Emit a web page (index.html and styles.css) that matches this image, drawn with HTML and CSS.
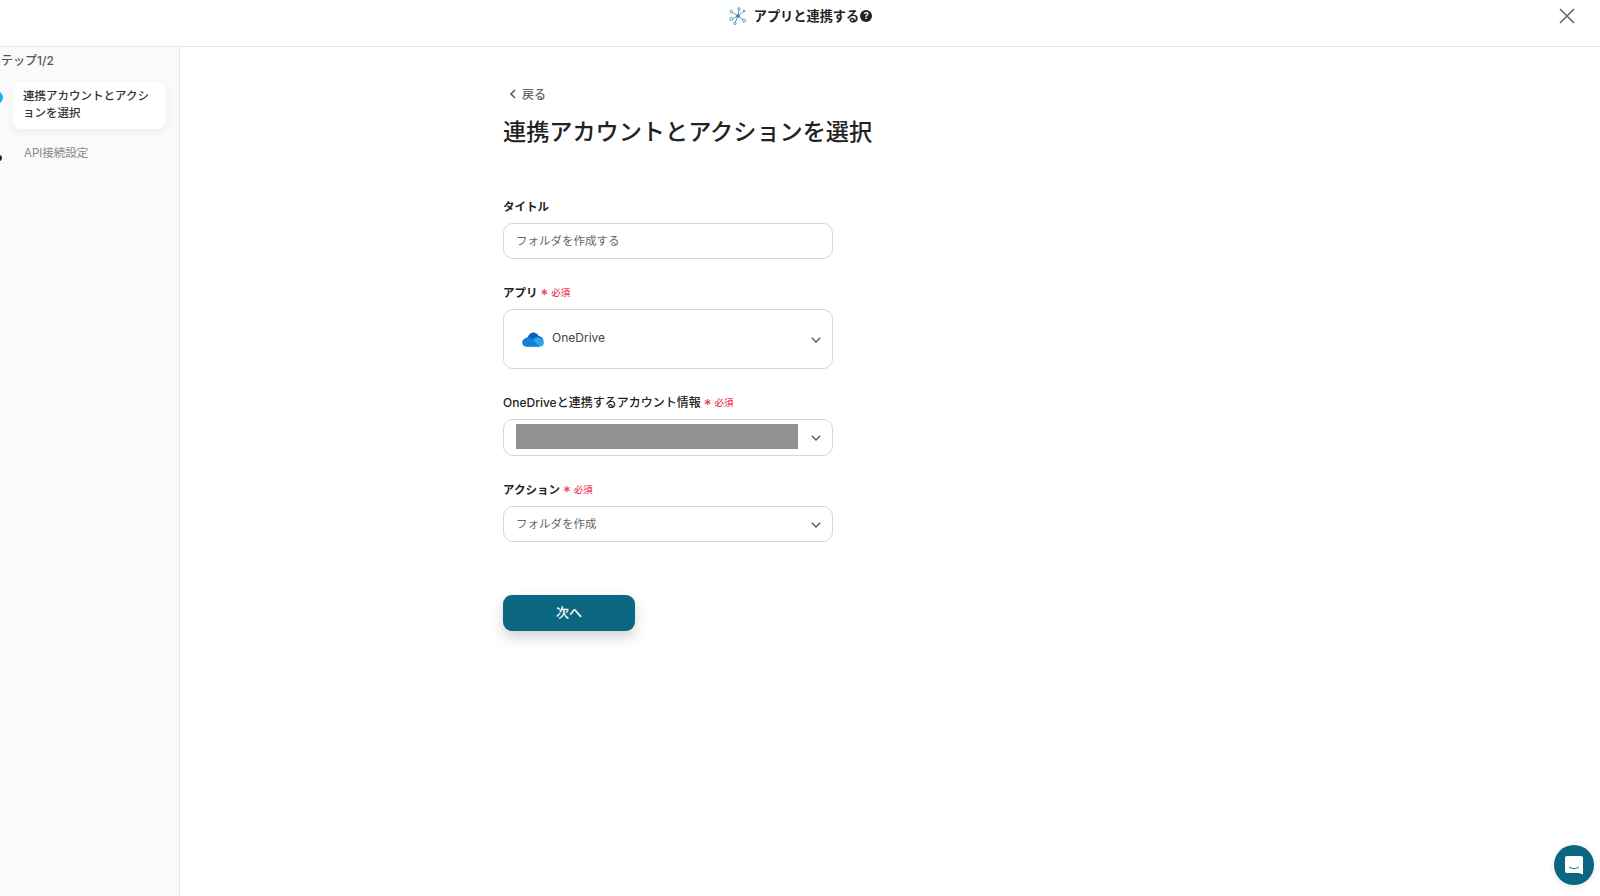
FILE: index.html
```html
<!DOCTYPE html>
<html lang="ja">
<head>
<meta charset="utf-8">
<title>アプリと連携する</title>
<link rel="stylesheet" href="styles.css">
</head>
<body>
<header class="topbar">
  <div class="topbar-title">
    <svg class="net-icon" width="18" height="18" viewBox="0 0 18 18" fill="none" stroke="#4f93ab" stroke-width=".9">
      <path d="M9 9 10 2.500M9 9 2.800 5M9 9l-6.500 3M9 9l6 4.500M9 9l-3 7M9 9l6-5"/>
      <circle cx="10" cy="2" r="1.300" fill="#fff"/>
      <circle cx="2.300" cy="4.700" r="1.400" fill="#fff"/>
      <circle cx="2.300" cy="12" r="1.500" fill="#fff"/>
      <circle cx="15" cy="13.700" r="1.500" fill="#fff"/>
      <circle cx="6" cy="16.300" r="1.200" fill="#fff"/>
      <circle cx="15" cy="4" r=".8" fill="#4f93ab"/>
      <circle cx="9" cy="9" r="1.800" fill="#1f7f9c" stroke="none"/>
    </svg>
    <span>アプリと連携する</span>
    <span class="help">?</span>
  </div>
  <button class="close" aria-label="閉じる">
    <svg width="16" height="16" viewBox="0 0 16 16" fill="none" stroke="#666" stroke-width="1.600"><path d="M1 1l14 14M15 1 1 15"/></svg>
  </button>
</header>
<div class="layout">
  <aside class="sidebar">
    <div class="step-count">ステップ1/2</div>
    <div class="step step-active">
      <span class="dot dot-blue"></span>
      <div class="step-card">連携アカウントとアクションを選択</div>
    </div>
    <div class="step step-next">
      <span class="dot dot-black"></span>
      <div class="step-text">API接続設定</div>
    </div>
  </aside>
  <main class="content">
    <a class="back">
      <svg width="8" height="10" viewBox="0 0 8 10" fill="none" stroke="#555" stroke-width="1.500"><path d="M6 1 2 5l4 4"/></svg>
      <span>戻る</span>
    </a>
    <h1 class="page-title">連携アカウントとアクションを選択</h1>
    <section class="form">
      <div class="field field-title">
        <label class="label">タイトル</label>
        <div class="control control-input"><span class="value">フォルダを作成する</span></div>
      </div>
      <div class="field field-app">
        <label class="label">アプリ<span class="req"><b>*</b>必須</span></label>
        <div class="control control-app">
          <svg class="onedrive" width="22" height="15" viewBox="0 0 24 16">
            <path d="M3 10C3 7.500 4.500 5.800 6.300 5.500 7.300 2.200 9.800.4 12.500.4c2.500 0 4.600 1.500 5.600 3.900 2.800.1 5 2.200 5.500 5.700L12 13z" fill="#0a62b5"/>
            <path d="M12 8.300c1.700-2 3.800-2.800 6-2.600 2.700.2 5 2 5.800 5 .5 2.600-1.300 5-3.800 5H8z" fill="#2aa5e8"/>
            <path d="M12 8.300c-1.500-1.600-3-2.800-6-2.500C2.500 6.300.2 8.600.2 11.400c0 2.600 2 4.600 4.800 4.600h15c-3-2-5.500-5-8-7.700z" fill="#1080d8"/>
          </svg>
          <span class="app-name">OneDrive</span>
          <svg class="chev" width="10" height="6" viewBox="0 0 10 6" fill="none" stroke="#555" stroke-width="1.300"><path d="M.8.8 5 5l4.200-4.200"/></svg>
        </div>
      </div>
      <div class="field field-account">
        <label class="label label-medium">OneDriveと連携するアカウント情報<span class="req"><b>*</b>必須</span></label>
        <div class="control control-account">
          <div class="mask"></div>
          <svg class="chev" width="10" height="6" viewBox="0 0 10 6" fill="none" stroke="#555" stroke-width="1.300"><path d="M.8.8 5 5l4.200-4.200"/></svg>
        </div>
      </div>
      <div class="field field-action">
        <label class="label">アクション<span class="req"><b>*</b>必須</span></label>
        <div class="control control-input">
          <span class="value">フォルダを作成</span>
          <svg class="chev" width="10" height="6" viewBox="0 0 10 6" fill="none" stroke="#555" stroke-width="1.300"><path d="M.8.8 5 5l4.200-4.200"/></svg>
        </div>
      </div>
      <button class="next">次へ</button>
    </section>
  </main>
</div>
<button class="chat" aria-label="チャット">
  <svg width="20" height="21" viewBox="0 0 20 21"><path d="M3 1h14a2 2 0 0 1 2 2v16.500l-4-1.500H3a2 2 0 0 1-2-2V3a2 2 0 0 1 2-2z" fill="#fff"/><path d="M5 12c3 2 7 2 10 0" fill="none" stroke="#0b6781" stroke-width="1"/></svg>
</button>
</body>
</html>
```

FILE: styles.css
```css
* { box-sizing: border-box; }
html, body { margin: 0; height: 100%; }
body {
  width: 1600px;
  height: 896px;
  overflow: hidden;
  background: #fff;
  color: #222;
  font-family: Inter, "Noto Sans CJK JP", sans-serif;
  display: flex;
  flex-direction: column;
}
.topbar {
  height: 47px;
  flex: none;
  border-bottom: 1px solid #e6e6e6;
  display: flex;
  justify-content: center;
  position: relative;
}
.topbar-title {
  display: flex;
  align-items: center;
  height: 31px;
  margin-left: 1px;
  font-size: 13.200px;
  font-weight: 700;
  color: #222;
}
.net-icon { margin-right: 7px; margin-top: 1px; }
.help {
  width: 12px;
  height: 12px;
  margin-left: 1px;
  border-radius: 50%;
  background: #222;
  color: #fff;
  font-size: 9px;
  line-height: 12px;
  text-align: center;
}
.close {
  position: absolute;
  right: 25px;
  top: 8px;
  width: 16px;
  height: 16px;
  padding: 0;
  border: 0;
  background: none;
  line-height: 0;
}
.layout { flex: 1; display: flex; min-height: 0; }
.sidebar {
  width: 180px;
  flex: none;
  background: #fafafa;
  border-right: 1px solid #e8e8e8;
  overflow: hidden;
  padding-top: 6px;
}
.step-count {
  margin-left: -11px;
  height: 16px;
  font-size: 12px;
  line-height: 16px;
  font-weight: 500;
  color: #555;
  white-space: nowrap;
}
.step { display: flex; position: relative; }
.step-active { margin: 13px 0 0 13px; }
.step-next { margin: 16px 0 0 24px; }
.dot { position: absolute; border-radius: 50%; }
.dot-blue { left: -23px; top: 9px; width: 13px; height: 13px; background: #14b4ea; }
.dot-black { left: -28px; top: 10px; width: 6px; height: 6px; background: #222; }
.step-card {
  width: 153px;
  height: 47px;
  padding: 5.500px 10px;
  background: #fff;
  border-radius: 8px;
  box-shadow: 0 3px 10px rgba(0, 0, 0, .06);
  font-size: 11.500px;
  line-height: 17.500px;
  font-weight: 500;
  color: #333;
}
.step-text { font-size: 11.500px; line-height: 17px; color: #888; }
.content { flex: 1; padding: 37px 0 0 323px; }
.back {
  display: flex;
  align-items: center;
  height: 18px;
  padding-left: 6px;
  font-size: 12px;
  font-weight: 500;
  color: #666;
}
.back svg { margin-right: 5px; margin-top: 2px; }
.page-title {
  margin: 12px 0 0;
  font-size: 23.150px;
  line-height: 36px;
  font-weight: 500;
  color: #222;
}
.form { width: 330px; }
.label {
  display: flex;
  align-items: center;
  height: 18px;
  padding-bottom: 1px;
  font-size: 11.500px;
  font-weight: 700;
  color: #222;
}
.label-medium { font-size: 12px; font-weight: 500; }
.req {
  display: inline-flex;
  align-items: center;
  margin-left: 3px;
  padding-top: 1px;
  font-size: 9.500px;
  font-weight: 500;
  color: #f0405f;
}
.req b { font-size: 15px; font-weight: 500; margin-right: 3px; line-height: 10px; padding-top: 6px; }
.field-title { margin-top: 47px; }
.field-app { margin-top: 24px; }
.field-account { margin-top: 24px; }
.field-action { margin-top: 24px; }
.control {
  display: flex;
  align-items: center;
  width: 330px;
  margin-top: 8px;
  background: #fff;
  border: 1px solid #d3d6de;
  border-radius: 10px;
  font-size: 11.500px;
  color: #666;
}
.control-input { height: 36px; padding: 0 12px; }
.control-app { height: 60px; padding: 0 12px 0 18px; }
.control-account { height: 37px; padding: 0 12px; }
.value { margin-top: -3px; }
.onedrive { margin-right: 8px; }
.app-name { color: #444; margin-top: -3px; font-size: 12px; }
.chev { margin-left: auto; margin-right: -1px; margin-top: 1px; flex: none; }
.mask { width: 282px; height: 25px; margin-top: -3px; background: #919191; }
.next {
  display: block;
  width: 132px;
  height: 36px;
  margin-top: 53px;
  padding: 0 0 4px;
  border: 0;
  border-radius: 9px;
  background: #0b6781;
  box-shadow: 0 6px 14px rgba(0, 0, 0, .18);
  color: #fff;
  font-family: inherit;
  font-size: 13px;
  font-weight: 500;
}
.chat {
  position: absolute;
  left: 1554px;
  top: 845px;
  width: 40px;
  height: 40px;
  padding: 0;
  border: 0;
  border-radius: 50%;
  background: #0b6781;
  box-shadow: 0 1px 6px rgba(0, 0, 0, .1);
  display: flex;
  align-items: center;
  justify-content: center;
}
```
